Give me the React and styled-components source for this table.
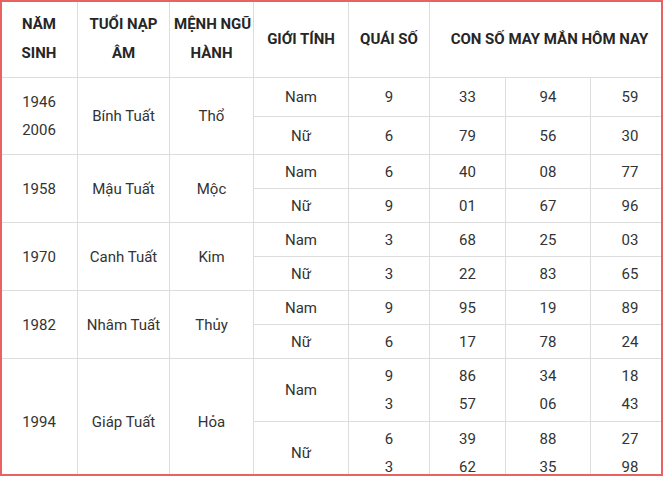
import React from 'react'
import styled, { createGlobalStyle } from 'styled-components';

const GlobalStyle = createGlobalStyle`
  html, body {
    margin: 0;
    padding: 0;
    background: #fff;
  }
  body {
    font-family: Roboto, 'Liberation Sans', Arial, sans-serif;
  }
`;

const widths = [77, 92, 84, 95, 81, 76, 85, 79];

const data = [
  { nam: ['1946', '2006'], tuoi: 'Bính Tuất', menh: 'Thổ', h: [39, 38],
    rows: [
      { gt: 'Nam', qs: ['9'], so: [['33', '94', '59']] },
      { gt: 'Nữ', qs: ['6'], so: [['79', '56', '30']] },
    ] },
  { nam: ['1958'], tuoi: 'Mậu Tuất', menh: 'Mộc', h: [34, 34],
    rows: [
      { gt: 'Nam', qs: ['6'], so: [['40', '08', '77']] },
      { gt: 'Nữ', qs: ['9'], so: [['01', '67', '96']] },
    ] },
  { nam: ['1970'], tuoi: 'Canh Tuất', menh: 'Kim', h: [34, 34],
    rows: [
      { gt: 'Nam', qs: ['3'], so: [['68', '25', '03']] },
      { gt: 'Nữ', qs: ['3'], so: [['22', '83', '65']] },
    ] },
  { nam: ['1982'], tuoi: 'Nhâm Tuất', menh: 'Thủy', h: [34, 34],
    rows: [
      { gt: 'Nam', qs: ['9'], so: [['95', '19', '89']] },
      { gt: 'Nữ', qs: ['6'], so: [['17', '78', '24']] },
    ] },
  { nam: ['1994'], tuoi: 'Giáp Tuất', menh: 'Hỏa', h: [63, 63],
    rows: [
      { gt: 'Nam', qs: ['9', '3'], so: [['86', '34', '18'], ['57', '06', '43']] },
      { gt: 'Nữ', qs: ['6', '3'], so: [['39', '88', '27'], ['62', '35', '98']] },
    ] },
];

const Lines = ({ items }) => items.map((t, i) => <Line key={i}>{t}</Line>);

const App = () => {
  return (
    <>
      <GlobalStyle />
      <Frame>
        <Table>
          <colgroup>
            {widths.map((w, i) => <Col key={i} $w={w} />)}
          </colgroup>
          <thead>
            <Row $h={77}>
              <Th><Lines items={['NĂM', 'SINH']} /></Th>
              <Th><Lines items={['TUỔI NẠP', 'ÂM']} /></Th>
              <Th><Lines items={['MỆNH NGŨ', 'HÀNH']} /></Th>
              <Th>GIỚI TÍNH</Th>
              <Th>QUÁI SỐ</Th>
              <Th colSpan={3}>CON SỐ MAY MẮN HÔM NAY</Th>
            </Row>
          </thead>
          <tbody>
            {data.map((g) =>
              g.rows.map((r, ri) => (
                <Row key={g.nam[0] + ri} $h={g.h[ri]}>
                  {ri === 0 && (
                    <>
                      <Td rowSpan={2}><Lines items={g.nam} /></Td>
                      <Td rowSpan={2}>{g.tuoi}</Td>
                      <Td rowSpan={2}>{g.menh}</Td>
                    </>
                  )}
                  <Td>{r.gt}</Td>
                  <Td><Lines items={r.qs} /></Td>
                  {[0, 1, 2].map((c) => (
                    <Td key={c}><Lines items={r.so.map((s) => s[c])} /></Td>
                  ))}
                </Row>
              ))
            )}
          </tbody>
        </Table>
      </Frame>
    </>
  )
}

export default App;

const Frame = styled.div`
  position: relative;
  width: 663px;
  height: 476px;
  overflow: hidden;
  background: #fff;
  &::after {
    content: '';
    position: absolute;
    inset: 0;
    border: 2px solid #e86262;
    pointer-events: none;
  }
`;

const Table = styled.table`
  border-collapse: collapse;
  table-layout: fixed;
  width: 669px;
  color: #333;
  font-size: 15px;
`;

const Col = styled.col`
  width: ${p => p.$w}px;
`;

const Row = styled.tr`
  height: ${p => p.$h}px;
`;

const Th = styled.th`
  border: 1px solid #dddddd;
  padding: 0 4px;
  font-weight: 700;
  color: #262626;
  text-align: center;
  vertical-align: middle;
  line-height: 29px;
  white-space: nowrap;
`;

const Td = styled.td`
  border: 1px solid #dddddd;
  padding: 0 4px;
  text-align: center;
  vertical-align: middle;
  line-height: 28px;
  white-space: nowrap;
`;

const Line = styled.div`
  display: block;
`;
